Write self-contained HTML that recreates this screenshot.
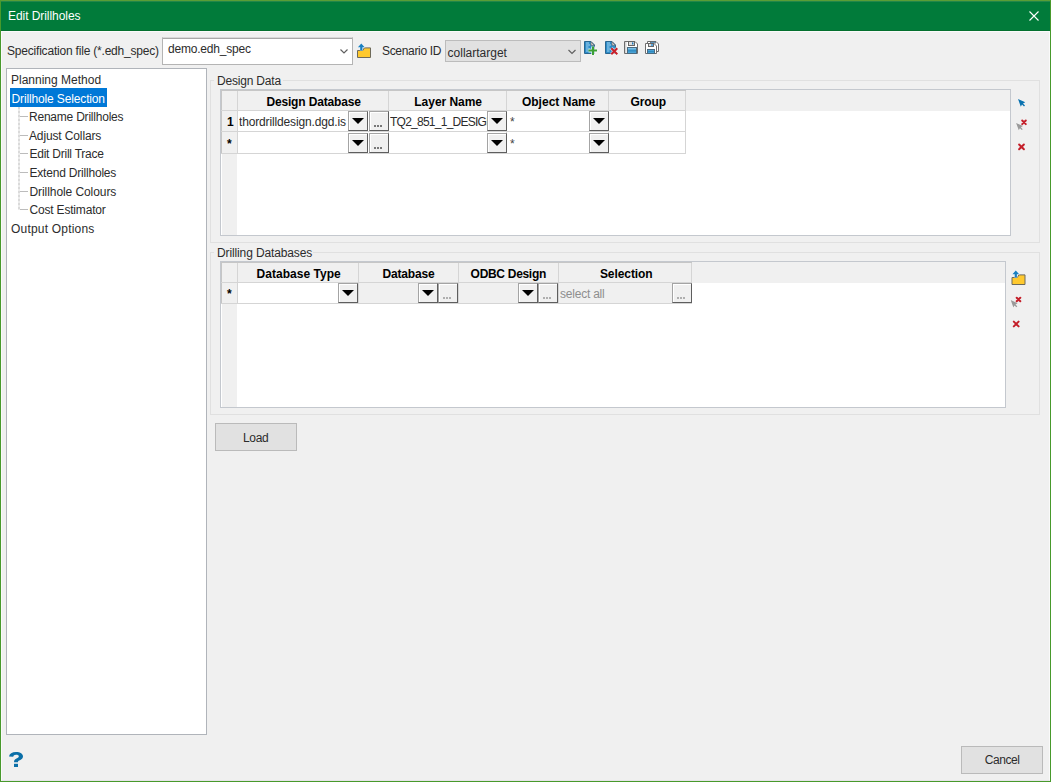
<!DOCTYPE html>
<html><head><meta charset="utf-8">
<style>
*{box-sizing:border-box;margin:0;padding:0}
html,body{width:1051px;height:782px;overflow:hidden;background:#f0f0f0}
body{position:relative;font-family:"Liberation Sans",sans-serif;font-size:12px;color:#000}
.a{position:absolute}
.t{position:absolute;white-space:nowrap;line-height:14px;height:14px;color:#2c2c2c}
.tb{position:absolute;white-space:nowrap;line-height:14px;height:14px;font-weight:bold;color:#000}
.dd,.el{position:absolute;width:20px;height:20px;border:1px solid;border-color:#a4a4a4 #5e5e5e #5e5e5e #a4a4a4;background:#f0f0f0;box-shadow:inset 1px 1px 0 #fff}
.dd:after{content:"";position:absolute;left:3px;top:6px;border-left:6.5px solid transparent;border-right:6.5px solid transparent;border-top:6.5px solid #000}
.el i{position:absolute;top:13px;width:2px;height:2px;background:#505050;border-radius:1px}
.el.dis i{background:#9a9a9a}
.el i:nth-child(1){left:4px}.el i:nth-child(2){left:7px}.el i:nth-child(3){left:10px}
svg.ov{position:absolute;left:0;top:0}
</style></head><body>
<div class="a" style="left:0px;top:0px;width:1051px;height:782px;border:1px solid #48992c;border-top-color:#5a9e36;background:#f0f0f0"></div>
<div class="a" style="left:1px;top:31px;width:1049px;height:750px;border:1px solid #fafafa;border-bottom-color:#e6e4e8"></div>
<div class="a" style="left:1px;top:1px;width:1049px;height:30px;background:#017b3a"></div>
<div class="a" style="left:1px;top:1px;width:1049px;height:1px;background:#22874a"></div>
<div class="a" style="left:1px;top:30px;width:1049px;height:1px;background:#04702f"></div>
<div class="t" style="left:8px;top:9px;letter-spacing:-0.06px;color:#fff">Edit Drillholes</div>
<div class="t" style="left:7px;top:44px;letter-spacing:-0.2px;">Specification file (*.edh_spec)</div>
<div class="a" style="left:162px;top:37px;width:191px;height:28px;background:#fff;border:1px solid #b4b4b4;border-top:1px solid #d8d8d8;box-shadow:inset 0 1px 0 #a8a8a8"></div>
<div class="t" style="left:168px;top:42px;letter-spacing:-0.2px;">demo.edh_spec</div>
<div class="t" style="left:382px;top:44px;letter-spacing:-0.32px;">Scenario ID</div>
<div class="a" style="left:445px;top:40px;width:136px;height:22px;background:#e1e1e1;border:1px solid #bcbcbc"></div>
<div class="t" style="left:447.6px;top:46px;letter-spacing:0px;">collartarget</div>
<div class="a" style="left:6px;top:68px;width:201px;height:667px;background:#fff;border:1px solid #b0b4ba"></div>
<div class="a" style="left:10px;top:88px;width:97px;height:19px;background:#0078d7"></div>
<div class="t" style="left:11px;top:73px;letter-spacing:0px;color:#2c2c2c">Planning Method</div>
<div class="t" style="left:11.6px;top:92px;letter-spacing:-0.144px;color:#fff">Drillhole Selection</div>
<div class="t" style="left:29px;top:110px;letter-spacing:-0.219px;color:#2c2c2c">Rename Drillholes</div>
<div class="t" style="left:29px;top:129px;letter-spacing:-0.131px;color:#2c2c2c">Adjust Collars</div>
<div class="t" style="left:29.5px;top:147px;letter-spacing:-0.24px;color:#2c2c2c">Edit Drill Trace</div>
<div class="t" style="left:29.5px;top:166px;letter-spacing:-0.2px;color:#2c2c2c">Extend Drillholes</div>
<div class="t" style="left:29.5px;top:185px;letter-spacing:-0.075px;color:#2c2c2c">Drillhole Colours</div>
<div class="t" style="left:29.5px;top:203px;letter-spacing:-0.185px;color:#2c2c2c">Cost Estimator</div>
<div class="t" style="left:11px;top:222px;letter-spacing:0.2px;color:#2c2c2c">Output Options</div>
<div class="a" style="left:18px;top:107px;width:2px;height:103px;background:repeating-linear-gradient(to bottom,#dadada 0 2px,#ececec 2px 4px)"></div>
<div class="a" style="left:20px;top:116px;width:8px;height:1px;background:#bcbcbc"></div>
<div class="a" style="left:20px;top:135px;width:8px;height:1px;background:#bcbcbc"></div>
<div class="a" style="left:20px;top:153px;width:8px;height:1px;background:#bcbcbc"></div>
<div class="a" style="left:20px;top:172px;width:8px;height:1px;background:#bcbcbc"></div>
<div class="a" style="left:20px;top:191px;width:8px;height:1px;background:#bcbcbc"></div>
<div class="a" style="left:20px;top:209px;width:8px;height:1px;background:#bcbcbc"></div>
<div class="a" style="left:210px;top:80px;width:830px;height:163px;border:1px solid #e0e0e0"></div>
<div class="a" style="left:214px;top:75px;width:69px;height:10px;background:#f0f0f0"></div>
<div class="t" style="left:217px;top:74px;letter-spacing:-0.19px;">Design Data</div>
<div class="a" style="left:220px;top:89px;width:791px;height:147px;background:#fff;border:1px solid #c4c8ce"></div>
<div class="a" style="left:221px;top:90px;width:465px;height:1px;background:#c6c6c6"></div>
<div class="a" style="left:221px;top:90px;width:1px;height:64px;background:#c6c6c6"></div>
<div class="a" style="left:222px;top:90px;width:788px;height:21px;background:#f0f0f0"></div>
<div class="a" style="left:221px;top:90px;width:465px;height:1px;background:#c6c6c6"></div>
<div class="a" style="left:222px;top:111px;width:15px;height:124px;background:#f0f0f0"></div>
<div class="a" style="left:221px;top:110px;width:465px;height:1px;background:#d5d5d5"></div>
<div class="a" style="left:237px;top:91px;width:1px;height:63px;background:#d5d5d5"></div>
<div class="a" style="left:388px;top:91px;width:1px;height:63px;background:#d5d5d5"></div>
<div class="a" style="left:506px;top:91px;width:1px;height:63px;background:#d5d5d5"></div>
<div class="a" style="left:608px;top:91px;width:1px;height:63px;background:#d5d5d5"></div>
<div class="a" style="left:685px;top:91px;width:1px;height:63px;background:#d5d5d5"></div>
<div class="a" style="left:221px;top:131px;width:465px;height:1px;background:#d5d5d5"></div>
<div class="a" style="left:221px;top:153px;width:465px;height:1px;background:#d5d5d5"></div>
<div class="tb" style="left:266.4px;top:95px;letter-spacing:-0.157px;">Design Database</div>
<div class="tb" style="left:414.3px;top:95px;letter-spacing:-0.033px;">Layer Name</div>
<div class="tb" style="left:521.9px;top:95px;letter-spacing:0.02px;">Object Name</div>
<div class="tb" style="left:630.4px;top:95px;letter-spacing:-0.05px;">Group</div>
<div class="tb" style="left:227px;top:115px;letter-spacing:0px;">1</div>
<div class="tb" style="left:227px;top:137px;letter-spacing:0px;">*</div>
<div class="t" style="left:239px;top:115px;width:109px;overflow:hidden;letter-spacing:-0.15px">thordrilldesign.dgd.is</div>
<div class="dd" style="left:348px;top:111px;height:20px"></div>
<div class="el" style="left:369px;top:111px;height:20px"><i></i><i></i><i></i></div>
<div class="dd" style="left:348px;top:133px;height:20px"></div>
<div class="el" style="left:369px;top:133px;height:20px"><i></i><i></i><i></i></div>
<div class="t" style="left:390px;top:115px;width:97px;overflow:hidden;letter-spacing:-0.75px">TQ2_851_1_DESIGN</div>
<div class="dd" style="left:487px;top:111px;height:20px"></div>
<div class="dd" style="left:487px;top:133px;height:20px"></div>
<div class="t" style="left:510px;top:115px;letter-spacing:0px;color:#444">*</div>
<div class="t" style="left:510px;top:137px;letter-spacing:0px;color:#444">*</div>
<div class="dd" style="left:589px;top:111px;height:20px"></div>
<div class="dd" style="left:589px;top:133px;height:20px"></div>
<div class="a" style="left:210px;top:252px;width:830px;height:163px;border:1px solid #e0e0e0"></div>
<div class="a" style="left:214px;top:247px;width:99px;height:10px;background:#f0f0f0"></div>
<div class="t" style="left:217px;top:246px;letter-spacing:-0.124px;">Drilling Databases</div>
<div class="a" style="left:220px;top:261px;width:786px;height:147px;background:#fff;border:1px solid #c4c8ce"></div>
<div class="a" style="left:221px;top:262px;width:471px;height:1px;background:#c6c6c6"></div>
<div class="a" style="left:221px;top:262px;width:1px;height:42px;background:#c6c6c6"></div>
<div class="a" style="left:222px;top:262px;width:783px;height:21px;background:#f0f0f0"></div>
<div class="a" style="left:221px;top:262px;width:471px;height:1px;background:#c6c6c6"></div>
<div class="a" style="left:222px;top:283px;width:15px;height:124px;background:#f0f0f0"></div>
<div class="a" style="left:359px;top:283px;width:332px;height:21px;background:#f0f0f0"></div>
<div class="a" style="left:221px;top:282px;width:471px;height:1px;background:#d5d5d5"></div>
<div class="a" style="left:221px;top:303px;width:471px;height:1px;background:#d5d5d5"></div>
<div class="a" style="left:237px;top:263px;width:1px;height:41px;background:#d5d5d5"></div>
<div class="a" style="left:358px;top:263px;width:1px;height:41px;background:#d5d5d5"></div>
<div class="a" style="left:458px;top:263px;width:1px;height:41px;background:#d5d5d5"></div>
<div class="a" style="left:558px;top:263px;width:1px;height:41px;background:#d5d5d5"></div>
<div class="a" style="left:691px;top:263px;width:1px;height:41px;background:#d5d5d5"></div>
<div class="tb" style="left:256.5px;top:267px;letter-spacing:0.033px;">Database Type</div>
<div class="tb" style="left:382.4px;top:267px;letter-spacing:-0.171px;">Database</div>
<div class="tb" style="left:470.6px;top:267px;letter-spacing:-0.3px;">ODBC Design</div>
<div class="tb" style="left:599.9px;top:267px;letter-spacing:-0.075px;">Selection</div>
<div class="tb" style="left:227px;top:287px;letter-spacing:0px;">*</div>
<div class="dd" style="left:338px;top:283px;height:20px"></div>
<div class="dd" style="left:418px;top:283px;height:20px"></div>
<div class="el dis" style="left:438px;top:283px;height:20px"><i></i><i></i><i></i></div>
<div class="dd" style="left:518px;top:283px;height:20px"></div>
<div class="el dis" style="left:538px;top:283px;height:20px"><i></i><i></i><i></i></div>
<div class="t" style="left:560px;top:287px;letter-spacing:-0.22px;color:#8e8e8e">select all</div>
<div class="el dis" style="left:672px;top:283px;height:20px"><i></i><i></i><i></i></div>
<div class="a" style="left:215px;top:423px;width:82px;height:28px;background:#e1e1e1;border:1px solid #bababa"></div>
<div class="t" style="left:242.9px;top:431px;letter-spacing:-0.3px;">Load</div>
<div class="a" style="left:961px;top:746px;width:82px;height:28px;background:#e1e1e1;border:1px solid #bababa"></div>
<div class="t" style="left:984.8px;top:753px;letter-spacing:-0.46px;">Cancel</div>
<svg class="ov" width="1051" height="782" viewBox="0 0 1051 782"><path d="M1029.5 11.5L1038.5 20.5M1038.5 11.5L1029.5 20.5" stroke="#fff" stroke-width="1.1" fill="none"/>
<path d="M340.5 49.5L344 53L347.5 49.5" stroke="#606060" stroke-width="1.2" fill="none"/>
<path d="M568.5 50L572 53.5L575.5 50" stroke="#606060" stroke-width="1.2" fill="none"/>
<g transform="translate(0,0)"><path d="M357.5 57.5V50.5H362.8L364.3 47.9H370.5V57.5Z" fill="#ffc92e" stroke="#6e6a5a" stroke-width="1"/><path d="M361.3 43.6L357.9 47.3H360.2V50.4H362.4V47.3H364.7Z" fill="#1a7fc0" stroke="#f4fbff" stroke-width="0.6" paint-order="stroke"/></g>
<g transform="translate(0,0)">
<path d="M584.5 41.5H591L594.5 45V53.5H584.5Z" fill="#2d8cc8" stroke="#2a6690" stroke-width="1"/>
<path d="M591 41.8V45.2H594.2Z" fill="#e8e8e8" stroke="#6a6a6a" stroke-width="0.8"/>
<path d="M586 43H589M586 45H590M586 47H588.5M586 49H590M586 51H588.5" stroke="#a8d6f2" stroke-width="1.2"/>
</g>
<path d="M593 46.4V54.9M588.5 50.6H597" stroke="#fff" stroke-width="3.6" opacity="0.8"/>
<path d="M593 46.4V54.9M588.5 50.6H597" stroke="#3da035" stroke-width="2"/>
<g transform="translate(21,0)">
<path d="M584.5 41.5H591L594.5 45V53.5H584.5Z" fill="#2d8cc8" stroke="#2a6690" stroke-width="1"/>
<path d="M591 41.8V45.2H594.2Z" fill="#e8e8e8" stroke="#6a6a6a" stroke-width="0.8"/>
<path d="M586 43H589M586 45H590M586 47H588.5M586 49H590M586 51H588.5" stroke="#a8d6f2" stroke-width="1.2"/>
</g>
<path d="M611.3 48.3L617.3 54.3M617.3 48.3L611.3 54.3" stroke="#fff" stroke-width="3.4" opacity="0.7"/>
<path d="M611.3 48.3L617.3 54.3M617.3 48.3L611.3 54.3" stroke="#c8202a" stroke-width="2"/>
<path d="M624.5 41.5H635L637.5 44V53.5H624.5Z" fill="#fff" stroke="#6e6e6e" stroke-width="1"/>
<rect x="625" y="42" width="1.5" height="11" fill="#d6d6d6"/>
<rect x="628.5" y="41.5" width="6" height="4" fill="#dcdcdc" stroke="#666" stroke-width="1"/>
<rect x="632" y="42.3" width="1.4" height="2.2" rx="0.6" fill="#1a78bd"/>
<rect x="627.5" y="47.5" width="9" height="6" fill="#4aa3d6" stroke="#4a6a80" stroke-width="1"/>
<rect x="628" y="48" width="8" height="1.2" fill="#7cc0e8"/>
<rect x="628" y="50.2" width="8" height="1.3" fill="#2f8ac0"/>
<path d="M647.5 41.5H656L658.5 44V51.5H647.5Z" fill="#fff" stroke="#6e6e6e" stroke-width="1"/>
<rect x="650.5" y="41.5" width="5" height="1.6" fill="#5aa6dc" stroke="#666" stroke-width="0.8"/>
<path d="M645.5 43.5H654L656.5 46V53.5H645.5Z" fill="#fff" stroke="#6e6e6e" stroke-width="1"/>
<rect x="648.5" y="43.5" width="5" height="3" fill="#dcdcdc" stroke="#666" stroke-width="1"/>
<rect x="651" y="44" width="2" height="2" fill="#5aa6dc"/>
<rect x="647.5" y="49.5" width="7" height="4" fill="#4aa3d6" stroke="#4a6a80" stroke-width="1"/>
<rect x="648" y="51" width="6" height="1.2" fill="#2f8ac0"/>
<path transform="translate(1018,99) scale(1)" d="M0 0L7.3 3.3L5 4.6L7 6.6L6 7.6L4 5.6L2.8 7.8Z" fill="#0a72b0" stroke="#f8f8f8" stroke-width="0.5" paint-order="stroke"/>
<path transform="translate(1016.1,122.9) scale(0.95)" d="M0 0L7.3 3.3L5 4.6L7 6.6L6 7.6L4 5.6L2.8 7.8Z" fill="#9a9a9a" stroke="#f8f8f8" stroke-width="0.5" paint-order="stroke"/>
<path d="M1022.2 120.5L1025.8 124.1M1025.8 120.5L1022.2 124.1" stroke="#c41f2a" stroke-width="2" stroke-linecap="round"/>
<path d="M1019.1 144.5L1023.9 149.3M1023.9 144.5L1019.1 149.3" stroke="#c41f2a" stroke-width="2" stroke-linecap="round"/>
<g transform="translate(654.5,227)"><path d="M357.5 57.5V50.5H362.8L364.3 47.9H370.5V57.5Z" fill="#ffc92e" stroke="#6e6a5a" stroke-width="1"/><path d="M361.3 43.6L357.9 47.3H360.2V50.4H362.4V47.3H364.7Z" fill="#1a7fc0" stroke="#f4fbff" stroke-width="0.6" paint-order="stroke"/></g>
<path transform="translate(1010.7,300.1) scale(0.95)" d="M0 0L7.3 3.3L5 4.6L7 6.6L6 7.6L4 5.6L2.8 7.8Z" fill="#9a9a9a" stroke="#f8f8f8" stroke-width="0.5" paint-order="stroke"/>
<path d="M1016.7 297.7L1020.3 301.3M1020.3 297.7L1016.7 301.3" stroke="#c41f2a" stroke-width="2" stroke-linecap="round"/>
<path d="M1013.8000000000001 321.6L1018.6 326.4M1018.6 321.6L1013.8000000000001 326.4" stroke="#c41f2a" stroke-width="2" stroke-linecap="round"/>
<path d="M9 756.5C9.5 753.5 12 752 16 752C20.5 752 23 754 23 756.5C23 759 20.5 760 18.3 761C18 761.3 18 761.7 18 762.3H14C14 760.5 14.5 759.5 16.5 758.5C18 757.8 18.8 757.3 18.8 756.3C18.8 755.3 17.8 754.8 16 754.8C14.3 754.8 13.4 755.5 13.2 756.8Z" fill="#0b6fa8"/>
<rect x="14" y="763.8" width="4" height="3.2" fill="#0b6fa8"/></svg>
</body></html>
